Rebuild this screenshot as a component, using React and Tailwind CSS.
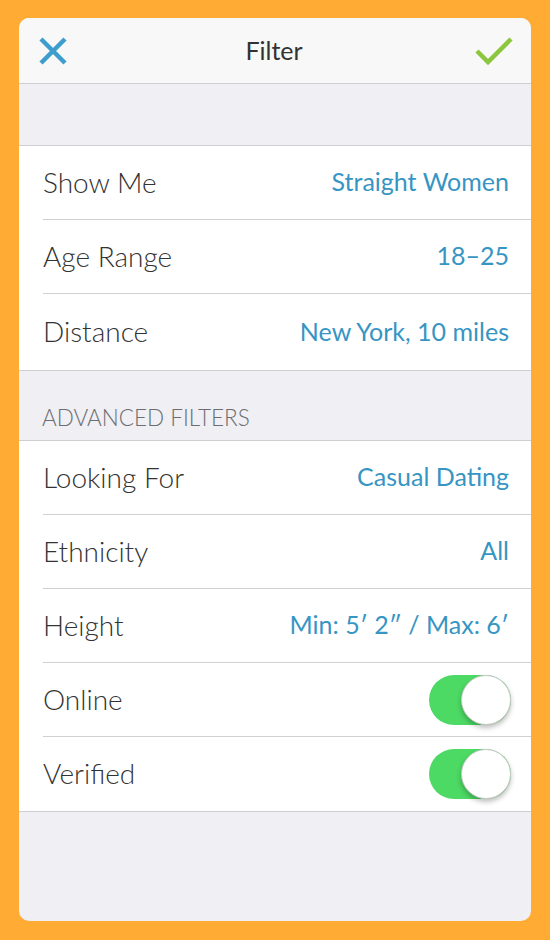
import React from 'react';

const FONT = { fontFamily: 'Lato, "Noto Sans", sans-serif' };

const Row = ({ label, value, toggle, last, tall }) => (
  <div className={`flex items-stretch pl-6 ${tall ? 'h-[76px]' : 'h-[74px]'}`}>
    <div className={`flex flex-1 items-center justify-between pr-[20px] ${last ? '' : 'border-b border-[#d0d0d4]'}`}>
      <span className="-mt-[2px] text-[28px] font-light leading-none text-[#333333]">{label}</span>
      {toggle ? (
        <div className="relative h-[50px] w-[82px] rounded-full bg-[#4cd964]">
          <div className="absolute right-0 top-0 h-[50px] w-[50px] rounded-full border border-[#c9c9c9] bg-white shadow-[0_3px_5px_rgba(0,0,0,0.25)]" />
        </div>
      ) : (
        <span className="-mt-[2px] pr-[2px] text-[25px] leading-none text-[#3795c3]">{value}</span>
      )}
    </div>
  </div>
);

export default function App() {
  return (
    <div className="flex min-h-[940px] w-[550px] bg-[#ffab34] px-[19px] pb-[19px] pt-[18px]" style={FONT}>
      <div className="flex flex-1 flex-col overflow-hidden rounded-[10px] bg-[#efeff4]">
        {/* Header */}
        <div className="flex h-[66px] items-center justify-between border-b border-[#cfcfd3] bg-[#f8f8f8] px-[18px]">
          <svg width="32" height="32" viewBox="0 0 32 32">
            <path d="M4 4 L28 28 M28 4 L4 28" stroke="#3d9dcd" strokeWidth="4.5" strokeLinecap="butt" />
          </svg>
          <span className="pl-[4px] text-[25px] leading-none text-[#333333]">Filter</span>
          <svg width="38" height="30" viewBox="0 0 38 30">
            <path d="M2 15 L13 26 L36 3" fill="none" stroke="#8cc63f" strokeWidth="4.5" strokeLinejoin="miter" />
          </svg>
        </div>

        <div className="h-[61px]" />

        <div className="border-y border-[#cfcfd3] bg-white">
          <Row label="Show Me" value="Straight Women" />
          <Row label="Age Range" value="18–25" />
          <Row label="Distance" value="New York, 10 miles" last tall />
        </div>

        <div className="flex h-[69px] items-end px-[23px] pb-[11px]">
          <span className="text-[22.5px] font-light leading-none text-[#6d6d72]">ADVANCED FILTERS</span>
        </div>

        <div className="border-y border-[#cfcfd3] bg-white">
          <Row label="Looking For" value="Casual Dating" />
          <Row label="Ethnicity" value="All" />
          <Row label="Height" value="Min: 5′ 2″ / Max: 6′" />
          <Row label="Online" toggle />
          <Row label="Verified" toggle last />
        </div>

        <div className="flex-1" />
      </div>
    </div>
  );
}
